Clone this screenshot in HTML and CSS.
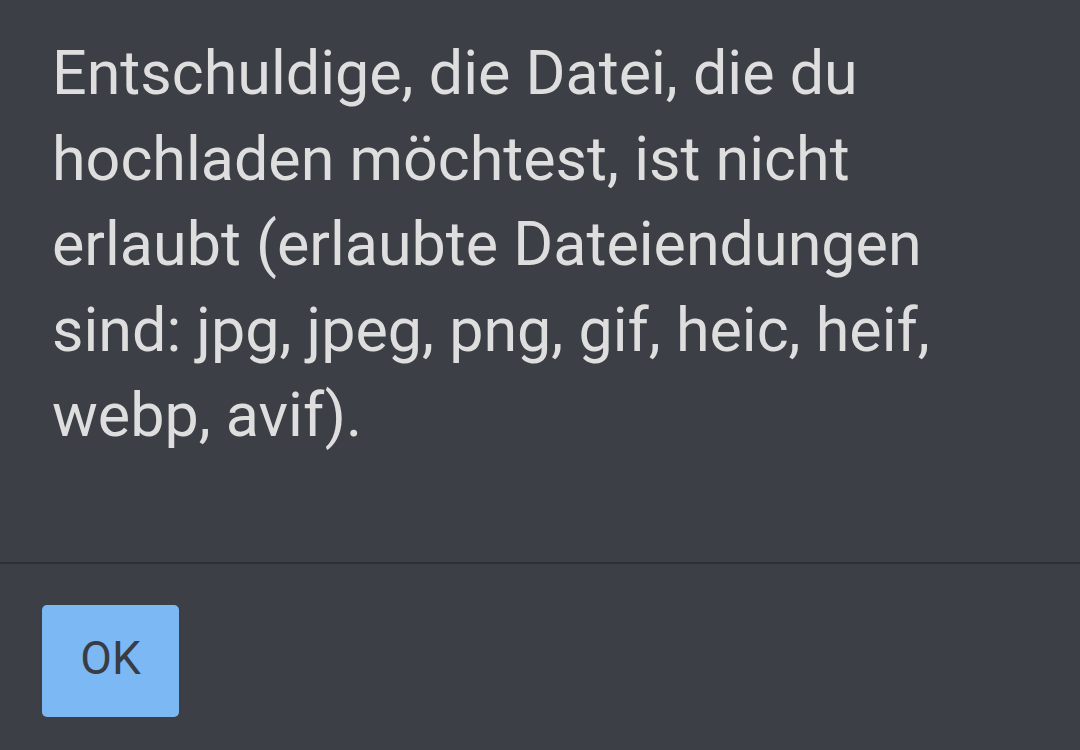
FILE: index.html
```html
<!DOCTYPE html>
<html lang="de">
<head>
    <meta charset="UTF-8">
    <title>Hinweis</title>
    <link rel="stylesheet" href="styles.css">
</head>
<body>
<div class="dialog">
    <div class="message">
        <p>Entschuldige, die Datei, die du hochladen möchtest, ist nicht erlaubt (erlaubte Dateiendungen sind: jpg, jpeg, png, gif, heic, heif, webp, avif).</p>
    </div>
    <div class="actions">
        <button class="ok">OK</button>
    </div>
</div>
</body>
</html>
```

FILE: styles.css
```css
html, body{
    margin: 0;
    height: 100%;
}
body{
    background-color: #3d3f46;
    font-family: Roboto, "Liberation Sans", sans-serif;
}
.dialog{
    width: 1080px;
    height: 750px;
    display: flex;
    flex-direction: column;
}
.message{
    padding: 31px 120px 0 52px;
    height: 564px;
    box-sizing: border-box;
    border-bottom: 2px solid #2e3035;
}
.message p{
    margin: 0;
    color: #dedede;
    font-size: 61px;
    line-height: 85.5px;
}
.actions{
    padding: 41px 0 0 42px;
}
.ok{
    width: 137px;
    height: 112px;
    border: none;
    border-radius: 5px;
    background-color: #7cb9f4;
    color: #393c44;
    font-family: Roboto, "Liberation Sans", sans-serif;
    font-size: 46px;
    padding: 0 0 7px;
}
```
